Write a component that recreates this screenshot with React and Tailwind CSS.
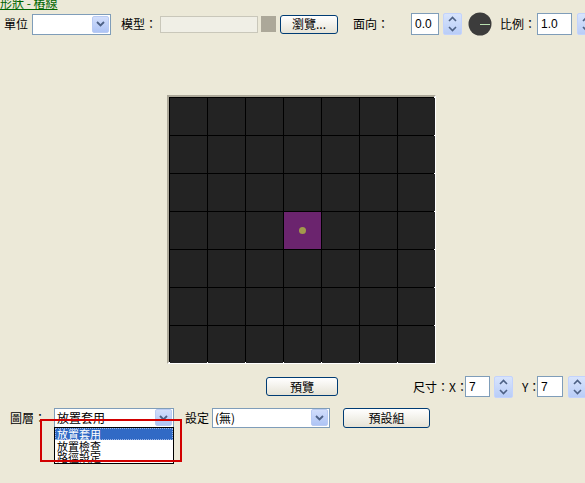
import React from 'react';

const font = { fontFamily: '"Noto Sans CJK TC", "Liberation Sans", sans-serif' };

function Spinner({ className = '' }) {
  return (
    <div className={`shrink-0 flex flex-col w-[19px] h-[22px] rounded-[2px] border border-[#c3d3fd] bg-gradient-to-b from-[#d8e4fc] to-[#b9cdf7] ${className}`}>
      <div className="flex-1 flex items-center justify-center">
        <svg width="9" height="6" viewBox="0 0 9 6"><path d="M1 5 L4.5 1.5 L8 5" fill="none" stroke="#4d6185" strokeWidth="1.6" /></svg>
      </div>
      <div className="flex-1 flex items-center justify-center">
        <svg width="9" height="6" viewBox="0 0 9 6"><path d="M1 1 L4.5 4.5 L8 1" fill="none" stroke="#4d6185" strokeWidth="1.6" /></svg>
      </div>
    </div>
  );
}

function Select({ value, className = '' }) {
  return (
    <div className={`shrink-0 flex items-center bg-white border border-[#7f9db9] ${className}`}>
      <span className="flex-1 pl-[2px] text-[12px] leading-[16px] text-black whitespace-nowrap">{value}</span>
      <div className="shrink-0 w-[17px] h-[17px] mr-px rounded-[2px] border border-[#b9cbf3] bg-gradient-to-b from-[#d2defb] to-[#aec4f5] flex items-center justify-center">
        <svg width="9" height="6" viewBox="0 0 9 6"><path d="M1 1 L4.5 4.5 L8 1" fill="none" stroke="#4d6185" strokeWidth="1.8" /></svg>
      </div>
    </div>
  );
}

function Button({ children, className = '' }) {
  return (
    <div className={`shrink-0 flex items-center justify-center rounded-[3px] border border-[#003c74] bg-gradient-to-b from-white to-[#e6e3d6] text-[12px] text-black whitespace-nowrap ${className}`}>
      {children}
    </div>
  );
}

function Field({ value, className = '' }) {
  return (
    <div className={`shrink-0 flex items-center bg-white border border-[#7f9db9] outline outline-1 outline-[#ece9d8] ${className}`}>
      <span className="pl-[3px] text-[12px] leading-none" style={{ fontFamily: '"Liberation Sans", sans-serif' }}>{value}</span>
    </div>
  );
}

function Label({ children, className = '' }) {
  return <span className={`shrink-0 whitespace-nowrap leading-[16px] ${className}`}>{children}</span>;
}

export default function App() {
  const cells = Array.from({ length: 49 }, (_, i) => i);
  return (
    <div className="relative w-[585px] h-[483px] overflow-hidden bg-[#ece9d8] text-black text-[12px]" style={font}>
      {/* title */}
      <div className="h-[10px] overflow-hidden">
        <div className="-mt-[4px] leading-[13px] text-[12px] text-[#006600] underline whitespace-nowrap">形狀 - 樁線</div>
      </div>

      {/* top row */}
      <div className="mt-[2px] h-[24px] flex items-center pl-[4px]">
        <Label className="w-[24px]">單位</Label>
        <Select value="" className="ml-[4px] w-[79px] h-[21px]" />
        <Label className="ml-[10px] w-[36px]">模型：</Label>
        <div className="shrink-0 ml-[3px] w-[98px] h-[17px] bg-[#f0efe6] border border-[#c9c7ba]" />
        <div className="shrink-0 ml-[3px] w-[15px] h-[16px] bg-[#aca899]" />
        <Button className="ml-[4px] w-[58px] h-[19px]">瀏覽...</Button>
        <Label className="ml-[15px] w-[36px]">面向：</Label>
        <Field value="0.0" className="ml-[22px] w-[28px] h-[22px]" />
        <Spinner className="ml-[4px]" />
        <svg className="ml-[6px] shrink-0" width="24" height="24" viewBox="0 0 24 24">
          <circle cx="12" cy="12" r="11.5" fill="#3c3c3c" />
          <line x1="12" y1="12.5" x2="22" y2="12.5" stroke="#b8e0b0" strokeWidth="1" />
        </svg>
        <Label className="ml-[8px] w-[36px]">比例：</Label>
        <Field value="1.0" className="ml-[1px] w-[35px] h-[22px]" />
        <Spinner className="ml-[5px]" />
      </div>

      {/* grid */}
      <div className="mt-[59px] ml-[167px] w-[269px] h-[269px] border-2 border-t-[#aca899] border-l-[#aca899] border-b-white border-r-white">
        <div className="grid grid-cols-[repeat(7,37px)] grid-rows-[repeat(7,37px)] gap-px bg-black p-px w-[265px] h-[265px]">
          {cells.map((i) => (
            <div key={i} className={`flex items-center justify-center ${i === 24 ? 'bg-[#6b246e]' : 'bg-[#232323]'}`}>
              {i === 24 && <div className="w-[7px] h-[7px] rounded-full bg-[#a29a4c]" />}
            </div>
          ))}
        </div>
      </div>

      {/* preview row */}
      <div className="mt-[12px] h-[21px] flex items-center">
        <Button className="ml-[266px] w-[72px] h-[19px]">預覽</Button>
        <Label className="ml-[75px] w-[52px]">尺寸：X：</Label>
        <Field value="7" className="w-[25px] h-[21px]" />
        <Spinner className="ml-[4px]" />
        <Label className="ml-[9px] w-[15px]">Y：</Label>
        <Field value="7" className="w-[26px] h-[21px]" />
        <Spinner className="ml-[5px]" />
      </div>

      {/* layer row */}
      <div className="mt-[10px] h-[21px] flex items-center">
        <Label className="ml-[10px] w-[44px]">圖層：</Label>
        <Select value="放置套用" className="w-[120px] h-[20px]" />
        <Label className="ml-[11px] w-[27px]">設定</Label>
        <Select value="(無)" className="w-[118px] h-[20px]" />
        <Button className="ml-[13px] w-[87px] h-[20px]">預設組</Button>
      </div>

      {/* dropdown list */}
      <div className="absolute left-[54px] top-[427px] w-[120px] h-[37px] bg-white border border-black text-[11px]">
        <div className="h-[12px] leading-[12px] whitespace-nowrap bg-[#316ac5] text-white outline outline-1 outline-dotted outline-[#9fb8e8] -outline-offset-1 pl-[2px]">放置套用</div>
        <div className="h-[12px] leading-[12px] whitespace-nowrap pl-[2px]">放置檢查</div>
        <div className="h-[11px] leading-[11px] whitespace-nowrap pl-[2px]">路徑設定</div>
      </div>

      {/* annotation */}
      <div className="absolute left-[40px] top-[419px] w-[142px] h-[43px] border-2 border-[#d20000]" />
    </div>
  );
}
